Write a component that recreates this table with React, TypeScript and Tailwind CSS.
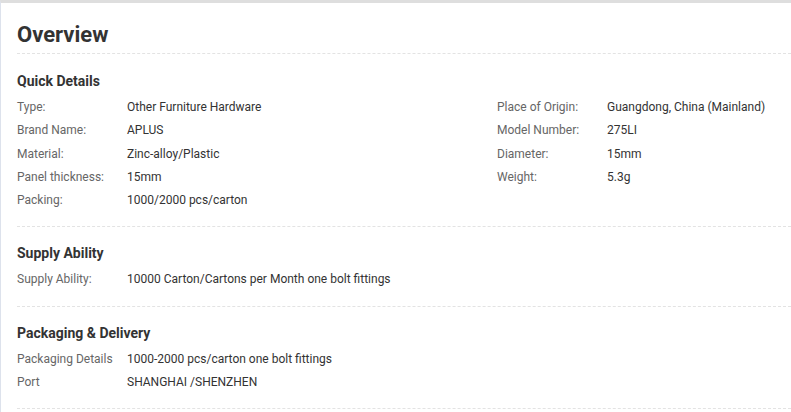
const quickLeft = [
  ["Type:", "Other Furniture Hardware"],
  ["Brand Name:", "APLUS"],
  ["Material:", "Zinc-alloy/Plastic"],
  ["Panel thickness:", "15mm"],
  ["Packing:", "1000/2000 pcs/carton"],
];

const quickRight = [
  ["Place of Origin:", "Guangdong, China (Mainland)"],
  ["Model Number:", "275LI"],
  ["Diameter:", "15mm"],
  ["Weight:", "5.3g"],
];

function Row({ label, value }: { label: string; value: string }) {
  return (
    <div className="flex text-[12px] leading-[23.25px]">
      <span className="w-[110px] shrink-0 text-[#666]">{label}</span>
      <span className="text-[#333]">{value}</span>
    </div>
  );
}

function Section({ title, first, children }: { title: string; first?: boolean; children: React.ReactNode }) {
  return (
    <div className={`${first ? "pt-[14px]" : "pt-[13px]"} pb-[14px] border-b border-dashed border-[#e3e3e3]`}>
      <h3 className="text-[14px] leading-[26px] font-bold text-[#333] mb-[2px]">{title}</h3>
      {children}
    </div>
  );
}

export default function App() {
  return (
    <div
      className="w-[791px] h-[412px] overflow-hidden bg-white border-l border-t-[3px] border-l-[#dde2ec] border-t-[#dedede]"
      style={{ fontFamily: "Roboto, 'Liberation Sans', sans-serif" }}
    >
      <div className="pl-4">
        <div className="pt-[17px] pb-[3px] border-b border-dashed border-[#e3e3e3]">
          <h2 className="text-[22px] leading-[30px] font-bold text-[#333]">Overview</h2>
        </div>

        <Section title="Quick Details" first>
          <div className="flex">
            <div className="w-[480px]">
              {quickLeft.map(([l, v]) => (
                <Row key={l} label={l} value={v} />
              ))}
            </div>
            <div>
              {quickRight.map(([l, v]) => (
                <Row key={l} label={l} value={v} />
              ))}
            </div>
          </div>
        </Section>

        <Section title="Supply Ability">
          <Row label="Supply Ability:" value="10000 Carton/Cartons per Month one bolt fittings" />
        </Section>

        <Section title="Packaging & Delivery">
          <Row label="Packaging Details" value="1000-2000 pcs/carton one bolt fittings" />
          <Row label="Port" value="SHANGHAI /SHENZHEN" />
        </Section>
      </div>
    </div>
  );
}
